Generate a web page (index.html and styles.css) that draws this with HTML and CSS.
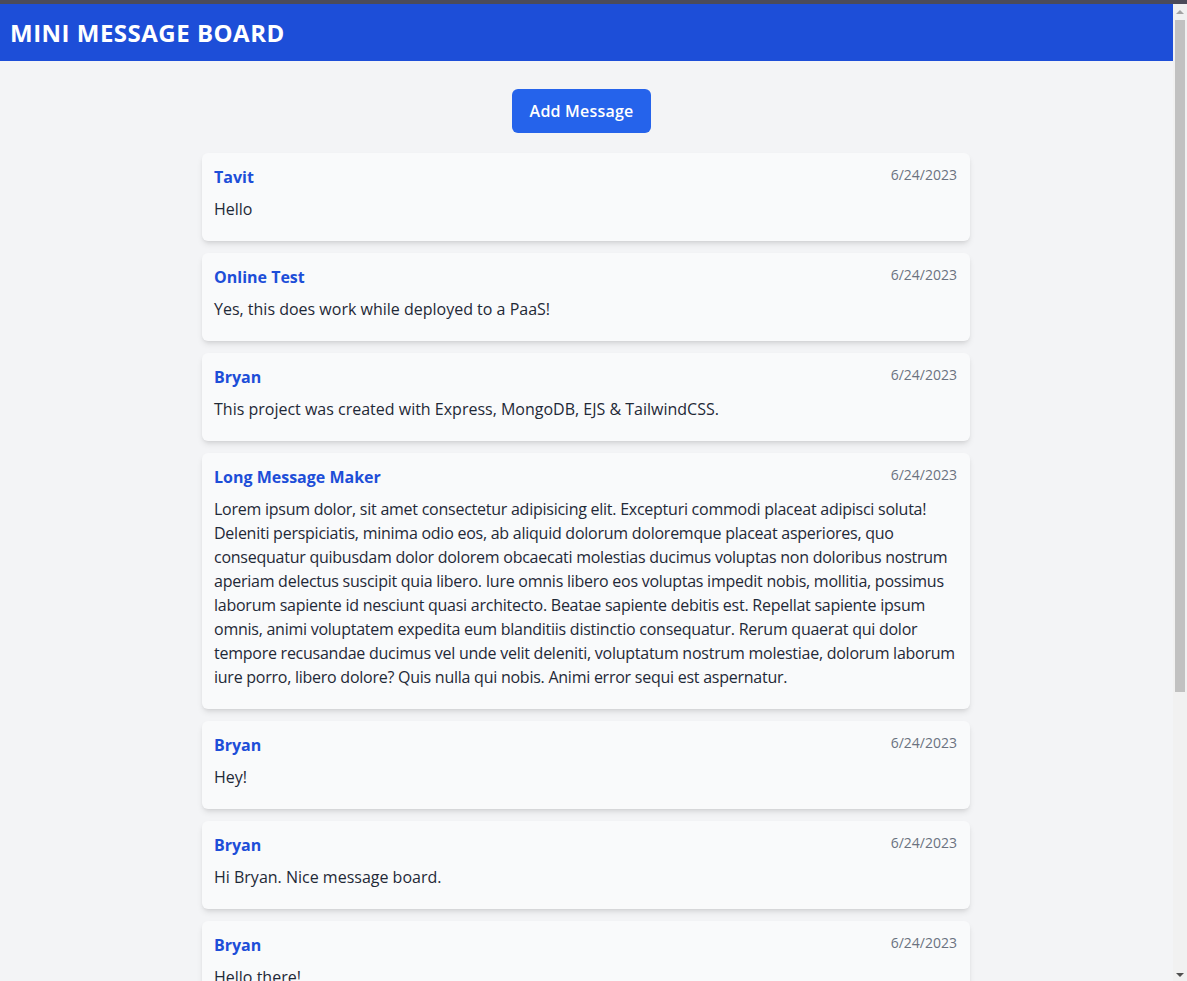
FILE: index.html
```
<!DOCTYPE html>
<html lang="en">
<head>
<meta charset="utf-8">
<title>Mini Message Board</title>
<link rel="stylesheet" href="styles.css">
</head>
<body>
<div class="chrome-strip"></div>
<div class="scrollbar" aria-hidden="true">
  <span class="arrow arrow-up"></span>
  <span class="thumb"></span>
  <span class="arrow arrow-down"></span>
</div>
<div class="page">
  <header class="site-header">
    <h1 class="site-title">MINI MESSAGE BOARD</h1>
  </header>
  <main class="main">
    <div class="actions">
      <a class="btn" href="#">Add Message</a>
    </div>
    <ul class="messages">
      <li class="card">
        <div class="card-head"><span class="author">Tavit</span><span class="date">6/24/2023</span></div>
        <p class="text">Hello</p>
      </li>
      <li class="card">
        <div class="card-head"><span class="author">Online Test</span><span class="date">6/24/2023</span></div>
        <p class="text">Yes, this does work while deployed to a PaaS!</p>
      </li>
      <li class="card">
        <div class="card-head"><span class="author">Bryan</span><span class="date">6/24/2023</span></div>
        <p class="text">This project was created with Express, MongoDB, EJS &amp; TailwindCSS.</p>
      </li>
      <li class="card">
        <div class="card-head"><span class="author">Long Message Maker</span><span class="date">6/24/2023</span></div>
        <p class="text text-long">Lorem ipsum dolor, sit amet consectetur adipisicing elit. Excepturi commodi placeat adipisci soluta!<br>Deleniti perspiciatis, minima odio eos, ab aliquid dolorum doloremque placeat asperiores, quo<br>consequatur quibusdam dolor dolorem obcaecati molestias ducimus voluptas non doloribus nostrum<br>aperiam delectus suscipit quia libero. Iure omnis libero eos voluptas impedit nobis, mollitia, possimus<br>laborum sapiente id nesciunt quasi architecto. Beatae sapiente debitis est. Repellat sapiente ipsum<br>omnis, animi voluptatem expedita eum blanditiis distinctio consequatur. Rerum quaerat qui dolor<br>tempore recusandae ducimus vel unde velit deleniti, voluptatum nostrum molestiae, dolorum laborum<br>iure porro, libero dolore? Quis nulla qui nobis. Animi error sequi est aspernatur.</p>
      </li>
      <li class="card">
        <div class="card-head"><span class="author">Bryan</span><span class="date">6/24/2023</span></div>
        <p class="text">Hey!</p>
      </li>
      <li class="card">
        <div class="card-head"><span class="author">Bryan</span><span class="date">6/24/2023</span></div>
        <p class="text">Hi Bryan. Nice message board.</p>
      </li>
      <li class="card">
        <div class="card-head"><span class="author">Bryan</span><span class="date">6/24/2023</span></div>
        <p class="text">Hello there!</p>
      </li>
    </ul>
  </main>
</div>
</body>
</html>
```
FILE: styles.css
```
* { box-sizing: border-box; }

html, body {
  margin: 0;
  padding: 0;
}

body {
  font-family: "Open Sans", "Noto Sans", sans-serif;
  background: #f3f4f6;
  color: #1f2937;
  font-size: 16px;
  line-height: 24px;
  overflow: hidden;
}

.chrome-strip {
  position: fixed;
  top: 0;
  left: 0;
  right: 0;
  height: 4px;
  background: #4b4b5a;
  z-index: 10;
}

.scrollbar {
  position: fixed;
  top: 4px;
  right: 0;
  bottom: 0;
  width: 14px;
  background: #f1f1f1;
  z-index: 9;
}

.thumb {
  position: absolute;
  top: 16px;
  left: 2px;
  width: 10px;
  height: 672px;
  background: #c1c1c1;
}

.arrow {
  position: absolute;
  left: 3px;
  width: 0;
  height: 0;
  border-left: 4px solid transparent;
  border-right: 4px solid transparent;
}

.arrow-up {
  top: 6px;
  border-bottom: 4px solid #a3a3a3;
}

.arrow-down {
  bottom: 4px;
  border-top: 4px solid #505050;
}

.page {
  padding-top: 4px;
  margin-right: 14px;
}

.site-header {
  background: #1d4ed8;
  height: 57px;
  display: flex;
  align-items: center;
  padding: 0 10px;
}

.site-title {
  margin: 0;
  color: #ffffff;
  font-size: 24px;
  line-height: 32px;
  font-weight: 700;
  letter-spacing: 0.5px;
}

.main {
  padding-top: 28px;
  padding-right: 1px;
}

.actions {
  display: flex;
  justify-content: center;
  margin-right: 9px;
}

.btn {
  display: inline-block;
  background: #2563eb;
  color: #ffffff;
  text-decoration: none;
  font-weight: 600;
  font-size: 16px;
  line-height: 24px;
  padding: 10px 18px;
  border-radius: 6px;
  letter-spacing: 0.2px;
}

.messages {
  list-style: none;
  margin: 20px auto 0;
  padding: 0;
  width: 768px;
  display: flex;
  flex-direction: column;
  gap: 12px;
}

.card {
  background: #f9fafb;
  border-radius: 6px;
  box-shadow: 0 4px 6px -1px rgba(0, 0, 0, 0.1), 0 2px 4px -2px rgba(0, 0, 0, 0.1);
  padding: 12px 13px 20px 12px;
}

.card-head {
  display: flex;
  justify-content: space-between;
  align-items: flex-start;
  margin-bottom: 8px;
}

.author {
  color: #1d4ed8;
  font-weight: 700;
}

.date {
  color: #6b7280;
  font-size: 14px;
  line-height: 20px;
}

.text {
  margin: 0;
}

.text-long {
  white-space: nowrap;
  letter-spacing: -0.25px;
}
```
